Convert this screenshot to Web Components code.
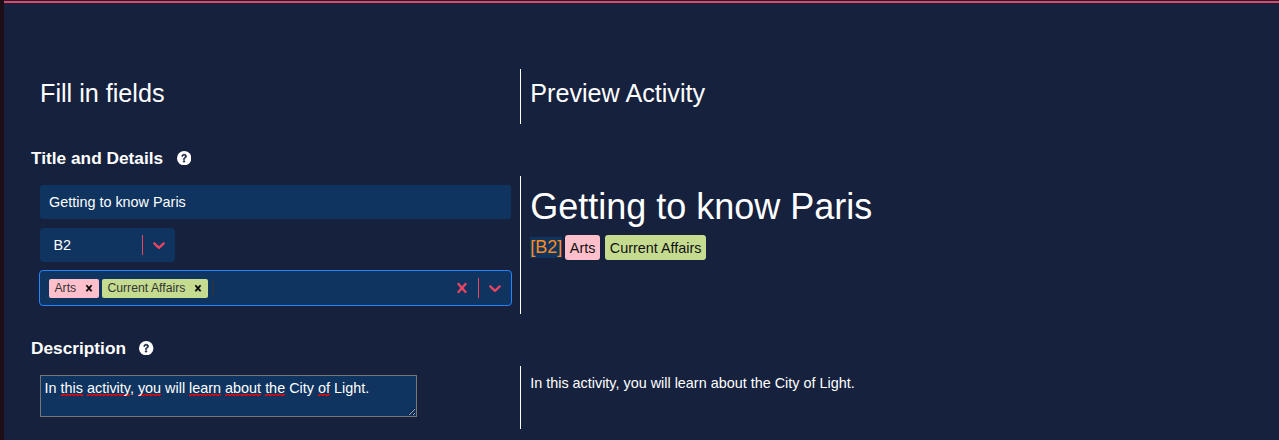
<!DOCTYPE html>
<html lang="en">
<head>
<meta charset="utf-8">
<title>Activity editor</title>
<style>
html,body{margin:0;height:100%;overflow:hidden;background:#16213e}
body{font:14.4px/1.5 "Liberation Sans",Arial,sans-serif;color:#fff}
</style>
</head>
<body>
<activity-editor></activity-editor>
<script>
const define = (name, html) => {
  const t = document.createElement('template');
  t.innerHTML = html;
  customElements.define(name, class extends HTMLElement {
    constructor() {
      super();
      this.attachShadow({mode: 'open'}).appendChild(t.content.cloneNode(true));
    }
  });
};

define('help-icon', `<style>:host{display:block;width:14.4px;height:14.4px}svg{display:block;width:100%;height:100%}</style>
<svg viewBox="0 0 16 16"><circle cx="8" cy="8" r="8" fill="#fff"/><path fill="#16213e" stroke="#16213e" stroke-width=".6" d="M5.496 6.033h.825c.138 0 .248-.113.266-.25.09-.656.54-1.134 1.342-1.134.686 0 1.314.343 1.314 1.168 0 .635-.374.927-.965 1.371-.673.489-1.206 1.06-1.168 1.987l.003.217a.25.25 0 0 0 .25.246h.811a.25.25 0 0 0 .25-.25v-.105c0-.718.273-.927 1.01-1.486.609-.463 1.244-.977 1.244-2.056 0-1.511-1.276-2.241-2.673-2.241-1.267 0-2.655.59-2.75 2.286a.237.237 0 0 0 .241.247zm2.325 6.443c.61 0 1.029-.394 1.029-.927 0-.552-.42-.94-1.029-.94-.584 0-1.009.388-1.009.94 0 .533.425.927 1.01.927z"/></svg>`);

define('chevron-icon', `<style>:host{display:block;padding:0 6px}svg{display:block;width:20px;height:20px;fill:#e94560}</style>
<svg viewBox="0 0 20 20"><path d="M4.516 7.548c0.436-0.446 1.043-0.481 1.576 0l3.908 3.747 3.908-3.747c0.533-0.481 1.141-0.446 1.574 0 0.436 0.445 0.408 1.197 0 1.615-0.406 0.418-4.695 4.502-4.695 4.502-0.217 0.223-0.502 0.335-0.787 0.335s-0.57-0.112-0.789-0.335c0 0-4.287-4.084-4.695-4.502s-0.436-1.17 0-1.615z"/></svg>`);

define('cross-icon', `<style>:host{display:block;width:20px;height:20px;color:#e94560}svg{display:block;width:100%;height:100%;fill:currentColor}</style>
<svg viewBox="0 0 20 20"><path d="M14.348 14.849c-0.469 0.469-1.229 0.469-1.697 0l-2.651-3.030-2.651 3.029c-0.469 0.469-1.229 0.469-1.697 0-0.469-0.469-0.469-1.229 0-1.697l2.758-3.15-2.759-3.152c-0.469-0.469-0.469-1.228 0-1.697s1.228-0.469 1.697 0l2.652 3.031 2.651-3.031c0.469-0.469 1.228-0.469 1.697 0s0.469 1.229 0 1.697l-2.758 3.152 2.758 3.15c0.469 0.469 0.469 1.229 0 1.698z"/></svg>`);

define('section-title', `<style>:host{display:flex;align-items:center;gap:13.5px;margin-left:27px;height:26px;font-size:17.28px;line-height:26px;font-weight:700}</style><slot></slot><help-icon></help-icon>`);

define('split-row', `<style>:host{display:grid;grid-template-columns:516px 1fr}
.left{padding:9px 9px 0 36px}.right{border-left:1px solid #fff;padding:9px 9px 0 9.2px}</style>
<div class="left"><slot name="form"></slot></div><div class="right"><slot name="preview"></slot></div>`);

define('column-title', `<style>:host{display:block;font-size:25.2px;line-height:30px}</style><slot></slot>`);

define('text-field', `<style>:host{display:block;box-sizing:border-box;height:34px;padding:0 9px;border-radius:3px;background:#0f3460;line-height:34px}</style><slot></slot>`);

define('select-box', `<style>:host{display:flex;align-items:center;box-sizing:border-box;border-radius:4px;background:#0f3460}
.value{flex:1;display:flex;align-items:center;line-height:24px}
.bar{width:1px;height:20px;background:#e94560}</style>
<div class="value"><slot></slot></div><slot name="clear"></slot><div class="bar"></div><chevron-icon></chevron-icon>`);

define('value-chip', `<style>:host{display:flex;align-items:center;box-sizing:border-box;width:var(--w);height:19px;margin-right:3px;border-radius:2px;background:var(--tone);font-size:12.24px;line-height:18px;color:#333}
span{flex:1;white-space:nowrap;padding:0 0 1px 5.4px}cross-icon{width:12px;height:12.5px;color:#000;stroke:#000;stroke-width:.8;margin:0 4.4px 0 0}</style>
<span><slot></slot></span><cross-icon></cross-icon>`);

define('text-caret', `<style>:host{display:block;width:1px;height:16px;margin-left:1px;background:#333}</style>`);

define('level-badge', `<style>:host{display:block;height:21px;line-height:20px;margin-top:2px;font-size:18px;color:#ff8c1a;background:#0f3460}</style><slot></slot>`);

define('topic-tag', `<style>:host{display:block;height:25px;padding:0 4.6px 0 4.8px;border-radius:3px;background:var(--tone);color:#111;line-height:26px}</style><slot></slot>`);

define('description-area', `<style>:host{display:block}
.box{box-sizing:border-box;width:377px;height:42px;border:1px solid #767676;padding:2px 3.6px;background:#0f3460;line-height:20px;overflow:auto;resize:both;white-space:nowrap}
u{text-decoration:none;background:
repeating-linear-gradient(90deg,#f00 0 2px,#f004 2px 4px) 0 100%/100% 1px no-repeat,
repeating-linear-gradient(90deg,#f008 0 2px,#f00 2px 4px) 0 calc(100% - 1px)/100% 1px no-repeat}</style>
<div class="box">In <u>this</u> <u>activity</u>, <u>you</u> will <u>learn</u> <u>about</u> <u>the</u> City <u>of</u> Light.</div>`);

define('activity-editor', `<style>
:host{display:block;box-sizing:border-box;height:440px;padding-top:1px;border-left:4px solid #1d0d17;background:#16213e;overflow:hidden}
.accent{height:2px;background:#e94560}
.head{height:55px;margin-top:66px}
.details{height:138px;margin-top:5px}
.description{height:63px;margin-top:5px}
.t1{margin-top:21px}.t2{margin-top:21px}
.level{width:135px;height:34px;margin-top:9px;padding-left:13.4px}
.topics{height:36px;margin:8px -1px 0;padding-left:9px;border:1px solid #2684ff}
h1{margin:0;font-size:36px;font-weight:400;line-height:43px}
.meta{display:flex;margin-top:7px}
.meta level-badge{margin-right:2.8px}.meta topic-tag{margin-right:5px}
p{margin:0;line-height:17px}
</style>
<div class="accent"></div>
<split-row class="head"><column-title slot="form">Fill in fields</column-title><column-title slot="preview">Preview Activity</column-title></split-row>
<section-title class="t1">Title and Details</section-title>
<split-row class="details">
  <div slot="form">
    <text-field>Getting to know Paris</text-field>
    <select-box class="level">B2</select-box>
    <select-box class="topics"><value-chip style="--tone:#ffc0cb;--w:50px">Arts</value-chip><value-chip style="--tone:#c5dc90;--w:106px">Current Affairs</value-chip><text-caret></text-caret><cross-icon slot="clear" style="margin-right:6px"></cross-icon></select-box>
  </div>
  <div slot="preview">
    <h1>Getting to know Paris</h1>
    <div class="meta"><level-badge>[B2]</level-badge><topic-tag style="--tone:#ffc0cb">Arts</topic-tag><topic-tag style="--tone:#c5dc90">Current Affairs</topic-tag></div>
  </div>
</split-row>
<section-title class="t2">Description</section-title>
<split-row class="description"><description-area slot="form"></description-area><p slot="preview">In this activity, you will learn about the City of Light.</p></split-row>`);
</script>
</body>
</html>
